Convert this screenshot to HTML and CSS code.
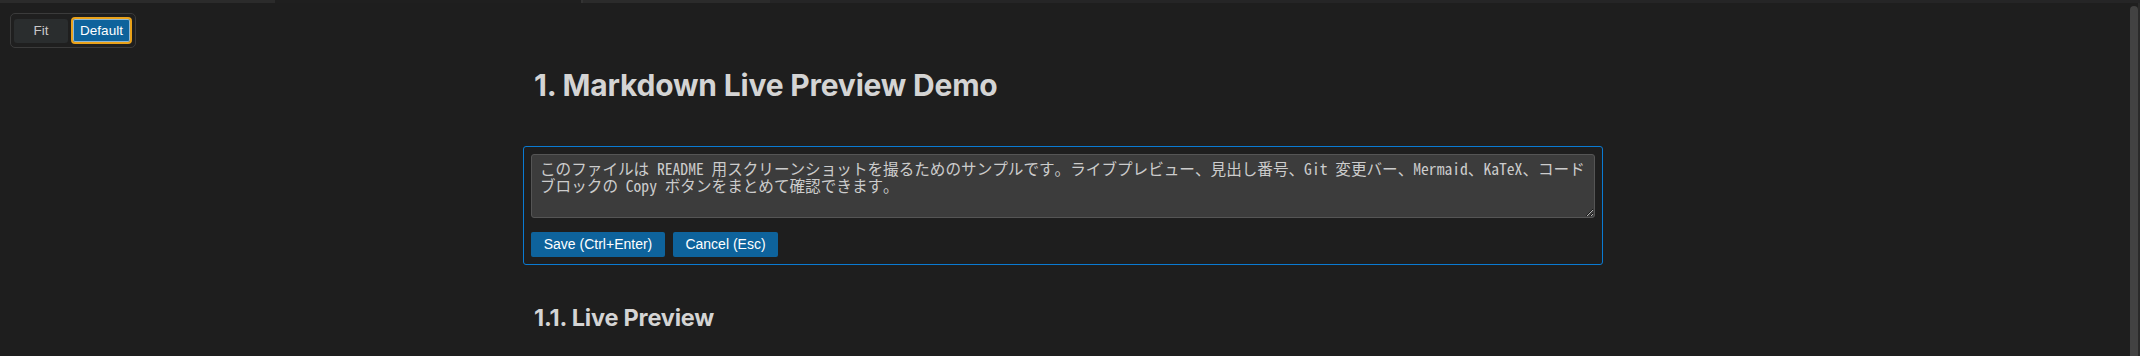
FILE: index.html
```html
<!DOCTYPE html>
<html lang="ja">
<head>
<meta charset="utf-8">
<title>Markdown Live Preview Demo</title>
<link rel="stylesheet" href="styles.css">
</head>
<body>
<div class="topstrip">
  <div class="seg seg-a"></div>
  <div class="seg seg-b"></div>
  <div class="seg seg-div"></div>
  <div class="seg seg-c"></div>
  <div class="seg seg-d"></div>
</div>
<div class="zoom-toggle">
  <button class="zt-btn">Fit</button>
  <button class="zt-btn zt-active">Default</button>
</div>
<div class="page">
  <main class="content">
    <h1 class="h1">1. Markdown Live Preview Demo</h1>
    <div class="editor">
      <textarea class="editor-text" spellcheck="false">このファイルは README 用スクリーンショットを撮るためのサンプルです。ライブプレビュー、見出し番号、Git 変更バー、Mermaid、KaTeX、コードブロックの Copy ボタンをまとめて確認できます。</textarea>
      <div class="editor-actions">
        <button class="act-btn">Save (Ctrl+Enter)</button>
        <button class="act-btn">Cancel (Esc)</button>
      </div>
    </div>
    <h2 class="h2">1.1. Live Preview</h2>
  </main>
</div>
<div class="vscroll"><div class="vthumb"></div></div>
</body>
</html>
```
FILE: styles.css
```css
html, body {
  margin: 0;
  padding: 0;
  background: #1e1e1e;
  height: 356px;
  overflow: hidden;
}
body {
  font-family: Inter, "Liberation Sans", sans-serif;
  color: #cccccc;
}
.topstrip {
  display: flex;
  height: 3px;
  width: 2140px;
}
.seg-a { width: 275px; background: #2b2b2b; }
.seg-b { width: 306px; background: #1f1f1f; }
.seg-div { width: 2px; background: #333333; }
.seg-c { width: 187px; background: #2b2b2b; }
.seg-d { flex: 1; background: #252526; }

.zoom-toggle {
  position: absolute;
  left: 10px;
  top: 13px;
  display: flex;
  align-items: center;
  gap: 3px;
  padding: 3px;
  border: 1px solid #3b3b3b;
  border-radius: 5px;
  background: #1f1f1f;
}
.zt-btn {
  font-family: "Liberation Sans", Arial, sans-serif;
  font-size: 13.5px;
  height: 24px;
  border: none;
  border-radius: 3px;
  padding: 0;
  cursor: pointer;
}
.zt-btn:first-child {
  width: 54px;
  background: #2a2d2e;
  color: #c8c8c8;
}
.zt-active {
  width: 61px;
  height: 27px;
  background: #0e639c;
  color: #ffffff;
  border: 2px solid #e9a21a;
  border-radius: 4px;
  box-shadow: inset 0 0 0 1px rgba(255,255,255,0.55);
}

.page {
  padding-right: 14px;
}
.content {
  width: 1058px;
  margin: 64px auto 0;
}
.h1 {
  margin: 0;
  font-size: 30px;
  line-height: 37.5px;
  font-weight: 700;
  color: #d4d4d4;
  letter-spacing: -0.2px;
}
.editor {
  margin: 41px -11px 0;
  border: 1px solid #0a7ad2;
  border-radius: 3px;
  padding: 7px;
  display: flex;
  flex-direction: column;
  gap: 14px;
}
.editor-text {
  display: block;
  box-sizing: border-box;
  width: 100%;
  height: 64px;
  margin: 0;
  padding: 5px 8px;
  background: #3c3c3c;
  border: 1px solid #555555;
  border-radius: 3px;
  color: #cccccc;
  font-family: "Noto Sans Mono CJK JP", "DejaVu Sans Mono", "Noto Sans CJK JP", monospace;
  font-size: 15.6px;
  line-height: 17px;
  resize: vertical;
  outline: none;
}
.editor-actions {
  display: flex;
  gap: 8px;
}
.act-btn {
  font-family: "Liberation Sans", Arial, sans-serif;
  font-size: 14px;
  height: 25px;
  padding: 0;
  background: #0e639c;
  color: #ffffff;
  border: none;
  border-radius: 2px;
}
.act-btn:first-child { width: 134px; }
.act-btn:last-child { width: 105px; }
.h2 {
  margin: 38px 0 0;
  font-size: 23.5px;
  line-height: 30px;
  font-weight: 700;
  color: #d4d4d4;
  letter-spacing: -0.2px;
}
.vscroll {
  position: absolute;
  top: 3px;
  right: 0;
  width: 10px;
  bottom: 0;
  display: flex;
  flex-direction: column;
  background: #1f1f1f;
  border-right: 2px solid #2a2a2a;
  box-sizing: border-box;
}
.vthumb {
  flex: 1;
  margin-top: 3px;
  width: 8px;
  background: #424242;
  border-radius: 4px 4px 0 0;
}
```
